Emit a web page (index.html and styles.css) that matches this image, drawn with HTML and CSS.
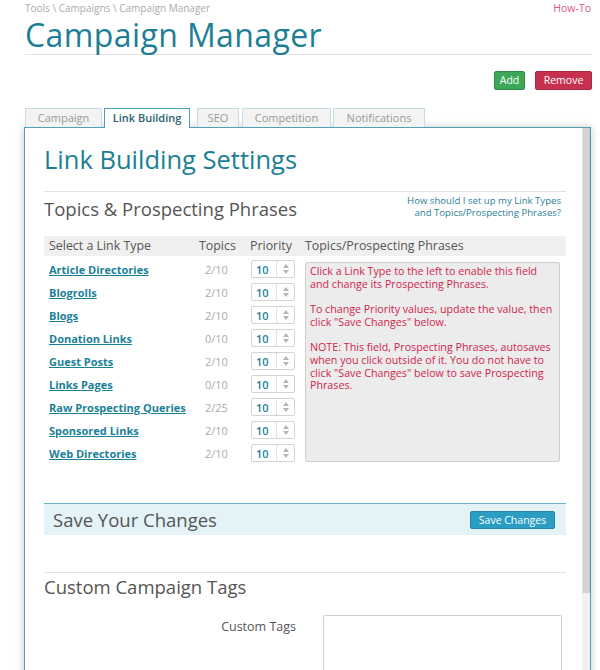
FILE: index.html
```html
<!DOCTYPE html>
<html>
<head>
<meta charset="utf-8">
<link rel="stylesheet" href="styles.css">
</head>
<body>
<div class="page">
  <div class="topbar">
    <div class="crumbs">Tools \ Campaigns \ Campaign Manager</div>
    <a class="howto">How-To</a>
  </div>
  <h1 class="title">Campaign Manager</h1>
  <div class="actions">
    <button class="btn btn-add">Add</button>
    <button class="btn btn-remove">Remove</button>
  </div>
  <div class="tabs">
    <div class="tab">Campaign</div>
    <div class="tab active">Link Building</div>
    <div class="tab">SEO</div>
    <div class="tab">Competition</div>
    <div class="tab">Notifications</div>
  </div>
  <div class="panel">
    <div class="panel-inner">
      <h2 class="settings-title">Link Building Settings</h2>
      <div class="section-head">
        <h3 class="section-title">Topics &amp; Prospecting Phrases</h3>
        <a class="help">How should I set up my Link Types<br>and Topics/Prospecting Phrases?</a>
      </div>
      <div class="grid">
        <div class="th">Select a Link Type</div>
        <div class="th">Topics</div>
        <div class="th">Priority</div>
        <div class="th">Topics/Prospecting Phrases</div>
        <div class="rows">
          <div class="row"><a class="ltype">Article Directories</a><span class="count">2/10</span><span class="spin"><span>10</span><i></i></span></div>
          <div class="row"><a class="ltype">Blogrolls</a><span class="count">2/10</span><span class="spin"><span>10</span><i></i></span></div>
          <div class="row"><a class="ltype">Blogs</a><span class="count">2/10</span><span class="spin"><span>10</span><i></i></span></div>
          <div class="row"><a class="ltype">Donation Links</a><span class="count">0/10</span><span class="spin"><span>10</span><i></i></span></div>
          <div class="row"><a class="ltype">Guest Posts</a><span class="count">2/10</span><span class="spin"><span>10</span><i></i></span></div>
          <div class="row"><a class="ltype">Links Pages</a><span class="count">0/10</span><span class="spin"><span>10</span><i></i></span></div>
          <div class="row"><a class="ltype">Raw Prospecting Queries</a><span class="count">2/25</span><span class="spin"><span>10</span><i></i></span></div>
          <div class="row"><a class="ltype">Sponsored Links</a><span class="count">2/10</span><span class="spin"><span>10</span><i></i></span></div>
          <div class="row"><a class="ltype">Web Directories</a><span class="count">2/10</span><span class="spin"><span>10</span><i></i></span></div>
        </div>
        <div class="phrases">
          <p>Click a Link Type to the left to enable this field and change its Prospecting Phrases.</p>
          <p>To change Priority values, update the value, then click "Save Changes" below.</p>
          <p>NOTE: This field, Prospecting Phrases, autosaves when you click outside of it. You do not have to click "Save Changes" below to save Prospecting Phrases.</p>
        </div>
      </div>
      <div class="savebar">
        <span class="save-title">Save Your Changes</span>
        <button class="btn btn-save">Save Changes</button>
      </div>
      <h3 class="section-title tags-title">Custom Campaign Tags</h3>
      <div class="tags-row">
        <label class="tags-label">Custom Tags</label>
        <div class="tags-box"></div>
      </div>
    </div>
    <div class="scrollbar"><div class="thumb"></div></div>
  </div>
</div>
</body>
</html>
```

FILE: styles.css
```css
html, body {
  margin: 0;
  padding: 0;
  overflow: hidden;
  background: #fff;
}
body {
  font-family: "Open Sans", "DejaVu Sans", sans-serif;
  color: #555;
}
.page {
  padding: 0 8px 0 25px;
}
.topbar {
  display: flex;
  justify-content: space-between;
  align-items: center;
  height: 14px;
  padding-top: 1px;
  line-height: 12px;
}
.crumbs {
  font-size: 10px;
  color: #aaa;
}
.howto {
  font-size: 10.5px;
  color: #d65a78;
  margin-right: 1px;
}
.title {
  margin: 0;
  font-weight: 400;
  font-size: 32px;
  line-height: 39px;
  color: #1d7f95;
  letter-spacing: 0.4px;
  border-bottom: 1px solid #dfe3e5;
}
.actions {
  display: flex;
  justify-content: flex-end;
  gap: 10px;
  margin-top: 16px;
}
.btn {
  font-family: inherit;
  font-size: 10.5px;
  color: #fff;
  border-radius: 2px;
  border: 1px solid transparent;
  padding: 0 6px;
  height: 19px;
  line-height: 17px;
  white-space: nowrap;
}
.btn-add {
  background: #3aa857;
  border-color: #2e8e48;
  width: 31px;
  padding: 0;
}
.btn-remove {
  background: #c8304f;
  border-color: #aa2842;
  width: 57px;
  padding: 0;
}
.tabs {
  display: flex;
  margin-top: 18px;
  height: 19px;
  position: relative;
  z-index: 2;
}
.tab {
  box-sizing: border-box;
  font-size: 11px;
  color: #999;
  background: #f3f3f3;
  border: 1px solid #c6dde3;
  border-bottom: none;
  height: 19px;
  line-height: 18px;
  text-align: center;
  white-space: nowrap;
}
.tab:nth-child(1) { width: 77px; margin-left: 0; }
.tab:nth-child(2) { width: 86px; margin-left: 2px; }
.tab:nth-child(3) { width: 42px; margin-left: 7px; }
.tab:nth-child(4) { width: 89px; margin-left: 3px; }
.tab:nth-child(5) { width: 92px; margin-left: 2px; }
.tab.active {
  background: #fff;
  color: #2a6270;
  font-weight: 600;
  border-color: #4fa2b6;
  height: 20px;
}
.panel {
  display: flex;
  width: 567px;
  height: 560px;
  box-sizing: border-box;
  margin-left: -1px;
  border: 1px solid #4fa2b6;
  background: #fff;
  box-shadow: 0 0 8px rgba(0,0,0,0.22);
  overflow: hidden;
}
.panel-inner {
  flex: 1;
  padding: 15px 16px 0 19px;
}
.scrollbar {
  width: 8px;
  flex: none;
  background: #f1f1f1;
}
.thumb {
  height: 465px;
  background: #d4d4d4;
  border-right: 1px solid #c2c2c2;
  border-left: 1px solid #e2e2e2;
}
.settings-title {
  margin: 0;
  font-weight: 400;
  font-size: 25.5px;
  line-height: 32px;
  color: #1d7f95;
}
.section-head {
  margin-top: 16px;
  border-top: 1px solid #dfe3e5;
  display: flex;
  justify-content: space-between;
  align-items: flex-start;
  padding-top: 2px;
}
.section-title {
  margin: 0;
  font-weight: 400;
  font-size: 18.5px;
  line-height: 24px;
  color: #555;
  padding-top: 3px;
}
.help {
  font-size: 9.6px;
  line-height: 12px;
  color: #2b7f98;
  text-align: right;
  padding-right: 5px;
  padding-top: 1px;
}
.grid {
  margin-top: 15px;
  display: grid;
  grid-template-columns: 151px 54px 56px 1fr;
  grid-template-rows: 20px auto;
}
.th {
  background: #f0f0f0;
  font-size: 12.4px;
  line-height: 20px;
  color: #555;
  white-space: nowrap;
}
.th:nth-child(1) { padding-left: 5px; }
.th:nth-child(2) { padding-left: 4px; }
.th:nth-child(3) { padding-left: 1px; }
.th:nth-child(4) { padding-left: 0; }
.rows {
  grid-column: 1 / 4;
  padding-top: 4px;
  display: flex;
  flex-direction: column;
  gap: 5px;
}
.row {
  display: grid;
  grid-template-columns: 151px 54px 56px;
  align-items: center;
  height: 18px;
}
.ltype {
  font-size: 11px;
  font-weight: 700;
  color: #1b7f9a;
  text-decoration: underline;
  padding-left: 5px;
  white-space: nowrap;
}
.count {
  font-size: 11px;
  color: #aaa;
  padding-left: 10px;
}
.spin {
  box-sizing: border-box;
  width: 44px;
  height: 18px;
  border: 1px solid #d4d4d4;
  border-radius: 2px;
  display: flex;
  align-items: center;
  margin-left: 2px;
}
.spin span {
  font-size: 11px;
  font-weight: 600;
  color: #1d7f95;
  padding-left: 4px;
  width: 20px;
}
.spin i {
  position: relative;
  height: 16px;
  border-left: 1px solid #e2e2e2;
  width: 17px;
  margin-left: auto;
}
.spin i::before,
.spin i::after {
  content: "";
  position: absolute;
  left: 6px;
  border-left: 3px solid transparent;
  border-right: 3px solid transparent;
}
.spin i::before {
  top: 3px;
  border-bottom: 4px solid #b5b5b5;
}
.spin i::after {
  top: 9px;
  border-top: 4px solid #b5b5b5;
}
.phrases {
  margin-top: 6px;
  margin-right: 6px;
  height: 200px;
  box-sizing: border-box;
  background: #ececec;
  border: 1px solid #cfcfcf;
  border-radius: 2px;
  padding: 2px 2px 2px 4px;
  font-size: 10.7px;
  line-height: 12.7px;
  color: #d11f4d;
}
.phrases p {
  margin: 0 0 12.7px;
}
.savebar {
  margin-top: 41px;
  border-top: 1px solid #6ab3c6;
  background: #e3f3f8;
  height: 31px;
  display: flex;
  justify-content: space-between;
  align-items: center;
  padding: 0 11px 0 9px;
}
.save-title {
  font-size: 18.5px;
  font-weight: 400;
  color: #555;
}
.btn-save {
  background: #2b9cc2;
  border-color: #2387a8;
  font-size: 10.5px;
  height: 18px;
  line-height: 16px;
  width: 85px;
  padding: 0;
}
.tags-title {
  margin-top: 37px;
  border-top: 1px solid #dfe3e5;
  padding-top: 2px;
}
.tags-row {
  display: flex;
  margin-top: 16px;
}
.tags-label {
  width: 252px;
  text-align: right;
  font-size: 12.5px;
  color: #555;
  padding-top: 3px;
}
.tags-box {
  margin-left: 27px;
  width: 237px;
  height: 120px;
  border: 1px solid #cfcfcf;
  border-radius: 2px;
}
```
